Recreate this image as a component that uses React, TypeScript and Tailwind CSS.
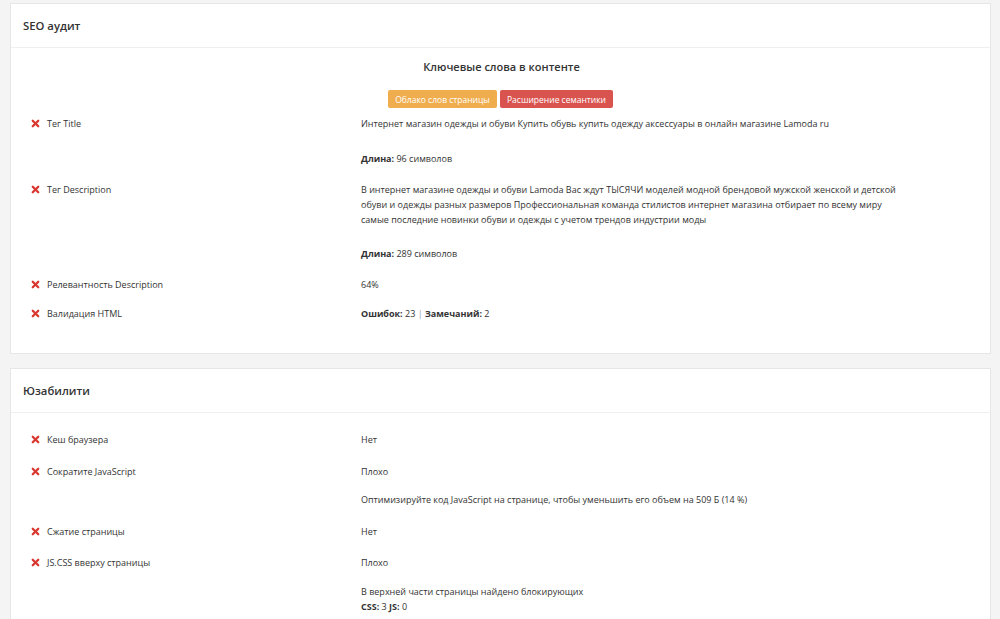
import { X } from 'lucide-react';

type Row = {
  label: string;
  pad?: string;
  values: { text: React.ReactNode; gap?: string }[];
};

const seoRows: Row[] = [
  {
    label: 'Тег Title',
    values: [
      { text: 'Интернет магазин одежды и обуви Купить обувь купить одежду аксессуары в онлайн магазине Lamoda ru' },
      { text: <><b className="font-bold">Длина:</b> 96 символов</>, gap: 'mt-[20px]' },
    ],
  },
  {
    label: 'Тег Description',
    values: [
      {
        text: 'В интернет магазине одежды и обуви Lamoda Вас ждут ТЫСЯЧИ моделей модной брендовой мужской женской и детской обуви и одежды разных размеров Профессиональная команда стилистов интернет магазина отбирает по всему миру самые последние новинки обуви и одежды с учетом трендов индустрии моды',
      },
      { text: <><b className="font-bold">Длина:</b> 289 символов</>, gap: 'mt-[19px]' },
    ],
  },
  { label: 'Релевантность Description', values: [{ text: '64%' }] },
  {
    label: 'Валидация HTML',
    pad: 'pt-[6px] pb-[9px]',
    values: [
      {
        text: (
          <>
            <b className="font-bold">Ошибок:</b> 23 <span className="text-gray-400">|</span>{' '}
            <b className="font-bold">Замечаний:</b> 2
          </>
        ),
      },
    ],
  },
];

const usabilityRows: Row[] = [
  { label: 'Кеш браузера', pad: 'pt-[8px] pb-[9px]', values: [{ text: 'Нет' }] },
  {
    label: 'Сократите JavaScript',
    values: [
      { text: 'Плохо' },
      { text: 'Оптимизируйте код JavaScript на странице, чтобы уменьшить его объем на 509 Б (14 %)', gap: 'mt-[13px]' },
    ],
  },
  { label: 'Сжатие страницы', pad: 'pt-[9px] pb-[8px]', values: [{ text: 'Нет' }] },
  {
    label: 'JS.CSS вверху страницы',
    values: [
      { text: 'Плохо' },
      {
        text: (
          <>
            В верхней части страницы найдено блокирующих
            <br />
            <b className="font-bold">CSS:</b> 3 <b className="font-bold">JS:</b> 0
          </>
        ),
        gap: 'mt-[14px]',
      },
    ],
  },
];

function AuditRow({ row }: { row: Row }) {
  return (
    <div className={`flex ${row.pad ?? 'py-[8px]'}`}>
      <div className="w-[331px] flex items-start shrink-0">
        <span className="w-[17px] h-[15px] flex items-center">
          <X className="w-[11px] h-[11px] text-[#d9372f]" strokeWidth={5} />
        </span>
        <span>{row.label}</span>
      </div>
      <div className="w-[548px]">
        {row.values.map((v, i) => (
          <div key={i} className={v.gap}>
            {v.text}
          </div>
        ))}
      </div>
    </div>
  );
}

function Card({ title, children, className }: { title: string; children: React.ReactNode; className?: string }) {
  return (
    <div className={`bg-white border border-[#e6e6e6] ${className ?? ''}`}>
      <div className="h-[44px] px-[12px] flex items-center border-b border-[#efefef]">
        <h2 className="text-[11.3px] font-semibold text-[#333]">{title}</h2>
      </div>
      {children}
    </div>
  );
}

export default function App() {
  return (
    <div
      className="min-h-[619px] bg-[#f4f4f4] pl-[10px] pr-[9px] pt-[3px] pb-[10px] text-[9px] leading-[15px] text-[#333]"
      style={{ fontFamily: '"Open Sans", "Noto Sans", sans-serif' }}
    >
      <Card title="SEO аудит">
        <div className="px-[19px] pt-[10px] pb-[23px]">
          <h3 className="text-center text-[11px] font-semibold text-[#333] leading-[18px] ml-[2px]">Ключевые слова в контенте</h3>
          <div className="flex justify-center gap-[3px] mt-[14px]">
            <button className="h-[18px] w-[109px] bg-[#f0ad4e] text-white text-[8.5px] rounded-[2px]">Облако слов страницы</button>
            <button className="h-[18px] w-[113px] bg-[#d9534f] text-white text-[8.5px] rounded-[2px]">Расширение семантики</button>
          </div>
          {seoRows.map((r, i) => (
            <AuditRow key={i} row={r} />
          ))}
        </div>
      </Card>
      <Card title="Юзабилити" className="mt-[14px]">
        <div className="px-[19px] pt-[11px] pb-[20px]">
          {usabilityRows.map((r, i) => (
            <AuditRow key={i} row={r} />
          ))}
        </div>
      </Card>
    </div>
  );
}
